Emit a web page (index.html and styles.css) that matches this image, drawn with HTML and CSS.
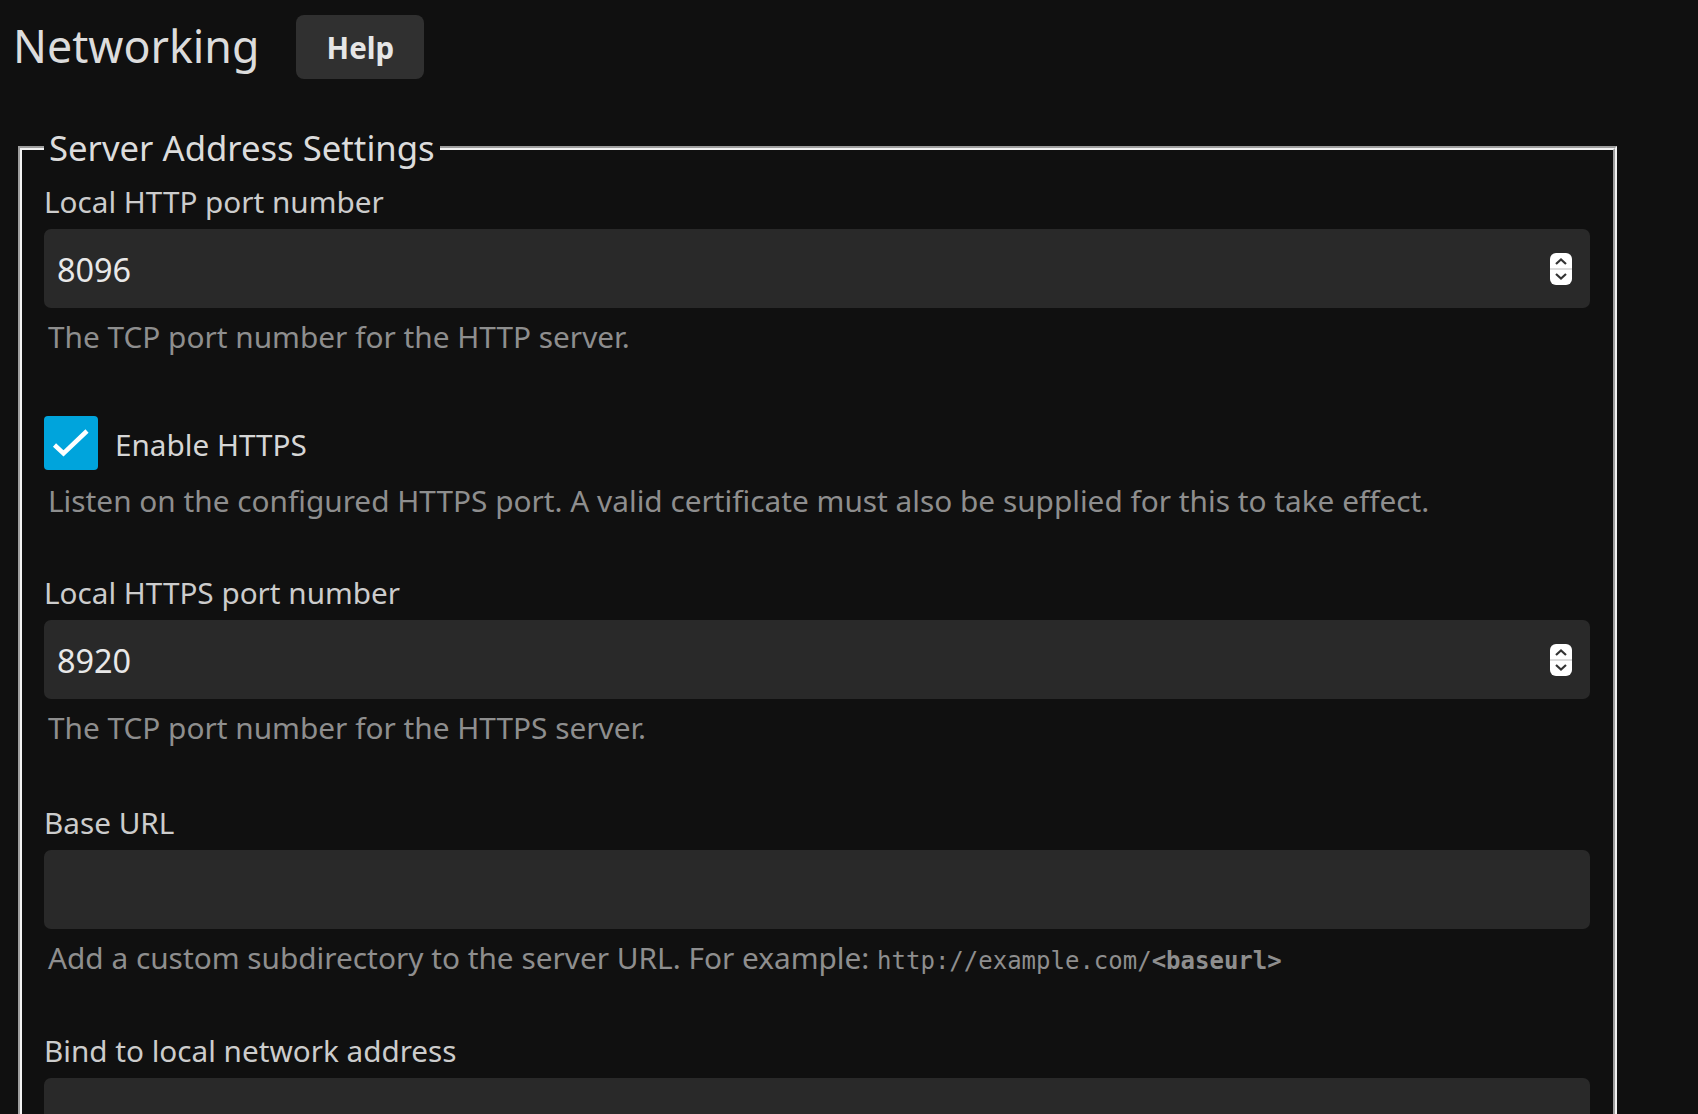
FILE: index.html
```html
<!DOCTYPE html>
<html lang="en">
<head>
<meta charset="utf-8">
<title>Networking</title>
<link rel="stylesheet" href="styles.css">
</head>
<body>
<div class="page">
  <div class="header">
    <h2 class="title">Networking</h2>
    <a class="btn-help">Help</a>
  </div>

  <fieldset class="group">
    <legend class="group-legend">Server Address Settings</legend>

    <div class="field">
      <label class="field-label">Local HTTP port number</label>
      <div class="input">
        <span class="input-value">8096</span>
        <svg class="spinner" width="22" height="32" viewBox="0 0 22 32">
          <rect x="0" y="0" width="22" height="32" rx="6" fill="#fff"/>
          <line x1="0" y1="16" x2="22" y2="16" stroke="#d0d0d0" stroke-width="1.5"/>
          <path d="M6 11 L11 6.5 L16 11" fill="none" stroke="#333" stroke-width="2.2"/>
          <path d="M6 21 L11 25.5 L16 21" fill="none" stroke="#333" stroke-width="2.2"/>
        </svg>
      </div>
      <div class="field-desc">The TCP port number for the HTTP server.</div>
    </div>

    <div class="check-field">
      <label class="check-row">
        <span class="checkbox">
          <svg width="54" height="54" viewBox="0 0 54 54">
            <path d="M10.5 29 L19.5 37.5 L43 15" fill="none" stroke="#fff" stroke-width="4.5"/>
          </svg>
        </span>
        <span class="check-label">Enable HTTPS</span>
      </label>
      <div class="field-desc check-desc">Listen on the configured HTTPS port. A valid certificate must also be supplied for this to take effect.</div>
    </div>

    <div class="field">
      <label class="field-label">Local HTTPS port number</label>
      <div class="input">
        <span class="input-value">8920</span>
        <svg class="spinner" width="22" height="32" viewBox="0 0 22 32">
          <rect x="0" y="0" width="22" height="32" rx="6" fill="#fff"/>
          <line x1="0" y1="16" x2="22" y2="16" stroke="#d0d0d0" stroke-width="1.5"/>
          <path d="M6 11 L11 6.5 L16 11" fill="none" stroke="#333" stroke-width="2.2"/>
          <path d="M6 21 L11 25.5 L16 21" fill="none" stroke="#333" stroke-width="2.2"/>
        </svg>
      </div>
      <div class="field-desc">The TCP port number for the HTTPS server.</div>
    </div>

    <div class="field field-url">
      <label class="field-label">Base URL</label>
      <div class="input"></div>
      <div class="field-desc">Add a custom subdirectory to the server URL. For example: <code class="mono">http://example.com/<b>&lt;baseurl&gt;</b></code></div>
    </div>

    <div class="field">
      <label class="field-label">Bind to local network address</label>
      <div class="input"></div>
      <div class="field-desc">Override the local IP address for the HTTP server.</div>
    </div>
  </fieldset>
</div>
</body>
</html>
```

FILE: styles.css
```css
html {
  scrollbar-width: none;
}
html::-webkit-scrollbar {
  display: none;
}
body {
  margin: 0;
  background: #101010;
  color: #d6d6d6;
  font-family: "Noto Sans", "Open Sans", sans-serif;
}
.page {
  padding: 0 81px 0 11px;
}
.header {
  display: flex;
  align-items: center;
  padding-top: 15px;
  height: 64px;
}
.title {
  margin: 0 0 3px 2px;
  font-size: 44.7px;
  font-weight: 400;
  line-height: 64px;
  color: #dcdcdc;
}
.btn-help {
  margin-left: 37px;
  width: 128px;
  height: 64px;
  display: inline-flex;
  align-items: center;
  justify-content: center;
  background: #303030;
  border-radius: 8px;
  font-weight: 700;
  font-size: 29.5px;
  color: #e6e6e6;
}
.group {
  margin: 46px 0 0 7px;
  border: 4px groove #f2f2f2;
  padding: 13px 23px 40px 22px;
  min-width: 0;
}
.group-legend {
  font-size: 34.7px;
  line-height: 46px;
  padding: 0 5px;
  color: #dcdcdc;
}
.field {
  margin-bottom: 58px;
}
.field-url {
  margin-bottom: 53px;
}
.field-label {
  display: block;
  font-size: 29.7px;
  line-height: 36px;
  color: #cccccc;
  margin-bottom: 9px;
}
.input {
  height: 79px;
  background: #292929;
  border-radius: 7px;
  display: flex;
  align-items: center;
  padding: 0 18px 0 13px;
}
.input-value {
  flex: 1;
  font-size: 32.4px;
  color: #e8e8e8;
}
.spinner {
  display: block;
}
.field-desc {
  margin-top: 10px;
  padding-left: 4px;
  font-size: 29.8px;
  line-height: 38px;
  color: #8e8e8e;
}
.mono {
  font-family: "DejaVu Sans Mono", monospace;
  font-size: 24px;
}
.check-field {
  margin-top: 60px;
  margin-bottom: 55px;
}
.check-row {
  display: flex;
  align-items: center;
}
.checkbox {
  width: 54px;
  height: 54px;
  background: #00a4dc;
  border-radius: 4px;
  display: block;
}
.checkbox svg {
  display: block;
}
.check-label {
  margin-left: 17px;
  padding-top: 4px;
  font-size: 29.7px;
  line-height: 36px;
  color: #d6d6d6;
}
.check-desc {
  margin-top: 12px;
}
```
